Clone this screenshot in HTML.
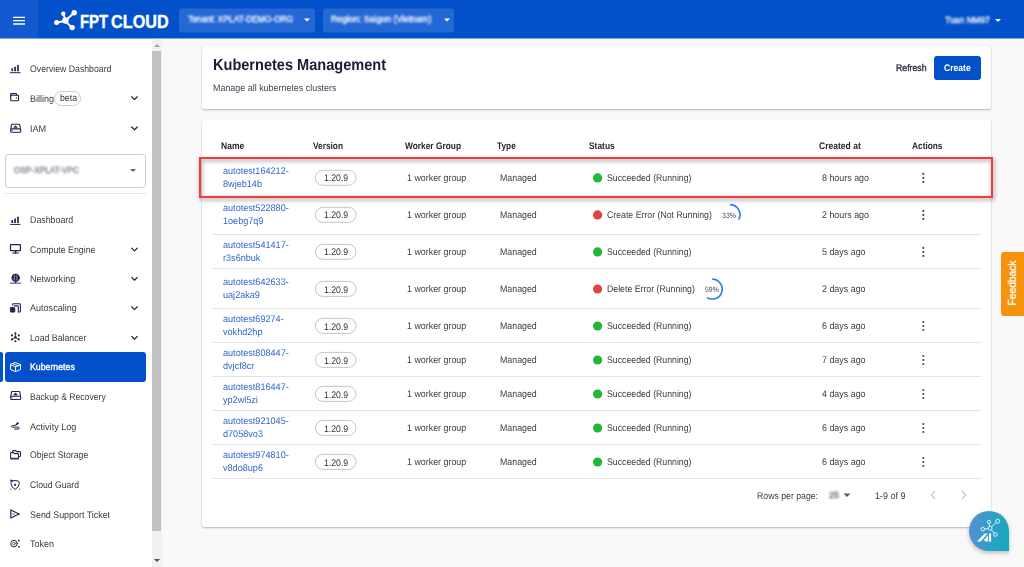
<!DOCTYPE html>
<html><head><meta charset="utf-8">
<style>
*{box-sizing:border-box;margin:0;padding:0}
html,body{width:1024px;height:567px;overflow:hidden;background:#f9f9f9;font-family:"Liberation Sans",sans-serif;color:#333;}
#hdr{z-index:5;position:absolute;left:0;top:0;width:1024px;height:39px;background:#0351ca;border-bottom:1px solid #82a8e4}
#ham{position:absolute;left:0;top:0;width:38.4px;height:38px;background:#1359cf;}
#ham i{position:absolute;left:13px;width:12px;height:2px;background:#fff;border-radius:1px}
.sel{position:absolute;top:9px;height:24px;background:#2468d6;border-radius:3px;transform:translateY(-0.6px)}
.blur{position:absolute;filter:blur(1.05px);-webkit-text-stroke:0.3px currentColor;color:#fff;font-size:8px;white-space:nowrap;line-height:10px}
.caret{position:absolute;width:0;height:0;border-left:3.2px solid transparent;border-right:3.2px solid transparent;border-top:3.4px solid #fff}
#side{position:absolute;left:0;top:38px;width:152px;height:529px;background:#fff;}
#sb{position:absolute;left:152px;top:38px;width:10px;height:529px;background:#f1f1f1}
#sb .th{position:absolute;left:0;top:12.7px;width:9.3px;height:480px;background:#c1c1c1}
.card{position:absolute;background:#fff;border-radius:2.5px;box-shadow:0 1px 2px rgba(0,0,0,.27),0 0 1px rgba(0,0,0,.07)}
.t{position:absolute;white-space:nowrap;text-rendering:geometricPrecision}
.row{position:absolute;left:212px;width:769px;height:1px;background:#e4e4e4}
.chip{position:absolute;left:315px;width:41.3px;height:15px;border:1px solid #c9c9c9;border-radius:8px;}
.dot{position:absolute;left:593px;width:9.2px;height:9.2px;border-radius:50%}
.g{background:#1fb837}.r{background:#dc4648}
.kebab{position:absolute;left:922.2px;width:3px}
.kebab i{display:block;width:2.2px;height:2.2px;background:#4a4a4a;border-radius:50%;margin-bottom:1.8px}
.chev{position:absolute;left:131px;width:7px;height:5px}
.ic{position:absolute;left:9px;width:13px;height:13px}
</style></head><body>
<div id="hdr"><div id="ham"></div><svg style="position:absolute;left:0;top:0" width="40" height="38" viewBox="0 0 40 38"><path d="M13.1 17.35H25M13.1 20.65H25M13.1 23.95H25" stroke="#fff" stroke-width="1.35"/></svg>
<svg style="position:absolute;left:50px;top:6px" width="125" height="28" viewBox="0 0 125 28">
<g stroke="#fff" stroke-width="1.8" fill="#fff"><line x1="7" y1="16.5" x2="15" y2="15"/><line x1="15" y1="15" x2="24.5" y2="6.5"/><line x1="15" y1="15" x2="22.5" y2="22"/><line x1="15.500" y1="14.500" x2="13.300" y2="7.700"/><circle cx="13.300" cy="7.700" r="2.200" stroke="none"/>
<circle cx="6.6" cy="16.6" r="2.5" stroke="none"/><circle cx="15.5" cy="14.5" r="3.2" stroke="none"/><circle cx="24.2" cy="6.8" r="2.7" stroke="none"/><circle cx="22.2" cy="21.6" r="2.7" stroke="none"/></g>
<g font-family="Liberation Sans" font-weight="bold" font-size="17.7" fill="#fff" stroke="#fff" stroke-width="0.35"><text x="30.000" y="21.900" textLength="28.200" lengthAdjust="spacingAndGlyphs">FPT</text><text x="61.100" y="21.900" textLength="57.600" lengthAdjust="spacingAndGlyphs">CLOUD</text></g></svg>
<div class="sel" style="left:179px;width:136px"><span class="blur" style="left:8.5px;top:5.5px;font-size:9.6px;transform:scaleX(0.875);transform-origin:0 50%">Tenant: XPLAT-DEMO-ORG</span><span class="caret" style="left:125px;top:10.2px"></span></div>
<div class="sel" style="left:323px;width:131px"><span class="blur" style="left:7.5px;top:5.5px;font-size:9.6px;transform:scaleX(0.915);transform-origin:0 50%">Region: Saigon (Vietnam)</span><span class="caret" style="left:120.500px;top:10.2px"></span></div>
<span class="blur" style="left:945px;top:15px;font-size:9.6px;transform:scaleX(0.9);transform-origin:0 50%">Tuan NM97</span><span class="caret" style="left:995px;top:18.5px"></span>
</div>
<div id="side">
<div style="position:absolute;left:5.3px;top:116px;width:140.4px;height:33.5px;border:1px solid #cfcfcf;border-radius:3px"></div>
<span class="blur" style="left:14px;top:126.5px;color:#77778c;font-size:9.6px;transform:scaleX(0.86);transform-origin:0 50%">OSP-XPLAT-VPC</span>
<span class="caret" style="left:130px;top:131px;border-top-color:#666"></span>
<div style="position:absolute;left:5px;top:155px;width:141px;height:1px;background:#e6e6e6"></div>
<div style="position:absolute;left:0;top:314.2px;width:2.7px;height:29.5px;background:#0351ca;border-radius:0 2px 2px 0"></div>
<div style="position:absolute;left:5.1px;top:314.2px;width:140.6px;height:29.5px;background:#0351ca;border-radius:3px"></div>
<div style="position:absolute;left:53.8px;top:53.3px;width:27.7px;height:14.4px;border:1px solid #ccc;border-radius:8px;background:#fff"></div>
</div>
<div id="sb"><div class="th"></div>
<span class="caret" style="left:2px;top:6px;border-width:0 3px 3px 3px;border-style:solid;border-color:transparent transparent #a3a3a3 transparent"></span>
<span class="caret" style="left:2px;top:521px;border-left-width:3px;border-right-width:3px;border-top:3px solid #505050"></span>
</div>
<div class="card" style="left:202px;top:46px;width:788.5px;height:63px"></div>
<div class="card" style="left:202px;top:119.5px;width:788.5px;height:407px"></div>
<div style="position:absolute;left:934px;top:56px;width:46.7px;height:23.6px;background:#0351ca;border-radius:3px"></div>
<svg style="position:absolute;left:0;top:0" width="152" height="567" viewBox="0 0 152 567" fill="none" stroke="#23234d" stroke-width="1.2" stroke-linecap="round" stroke-linejoin="round">
<!-- bars: overview -->
<g id="bars"><path d="M10.4 72.7H20.1" stroke-width="1"/><path d="M12.3 71.3V68.3M15.1 71.3V66.8M18 71.3V65" stroke-width="1.7" stroke-linecap="butt"/></g>
<use href="#bars" y="151.7"/>
<!-- wallet -->
<rect x="10.7" y="95.2" width="7.8" height="5.5" rx="0.7" stroke-width="1.15"/><path d="M10.7 95.4V94.4Q10.7 93.6 11.5 93.6H15.8Q16.6 93.6 16.6 94.4V94.9" stroke-width="1.1"/><circle cx="16.4" cy="97.9" r="0.6" fill="#23234d" stroke="none"/>
<!-- IAM drive -->
<g id="drive"><path d="M10.9 128.7L11.5 124.9Q11.6 124.2 12.3 124.2H19Q19.7 124.2 19.8 124.9L20.4 128.7" stroke-width="1.1"/><rect x="10.7" y="128.9" width="10" height="3.3" rx="0.8" stroke-width="1.1"/><path d="M13.7 127.6Q15.5 123.8 17.3 127.6Z" fill="#23234d" stroke-width="0.5"/><path d="M11.8 130.500H12.300" stroke-width="0.8"/></g>
<use href="#drive" y="267.3"/>
<!-- monitor -->
<rect x="10.5" y="244.700" width="9.9" height="6" rx="0.5" stroke-width="1.25"/><path d="M12.800 253H18.400" stroke-width="1.2"/><path d="M15.5 251V253" stroke-width="1.600"/>
<!-- globe -->
<circle cx="15.6" cy="277.800" r="3.800" fill="#23234d" stroke-width="0.8"/><path d="M14.3 275.200V280.400M16.9 275.200V280.400" stroke="#d6d6e6" stroke-width="0.600" stroke-dasharray="1.2 0.700"/><path d="M15.600 281.800V283.100M10.400 283.100H20.800" stroke-width="0.9"/>
<!-- autoscaling -->
<path d="M12.6 305.000V304.400Q12.600 303.700 13.3 303.700H19.700Q20.400 303.700 20.400 304.400V311.300Q20.400 312 19.700 312H19" stroke-width="1.1"/><path d="M14.200 305.900H17.600Q18.300 305.900 18.300 306.600V311.900" stroke-width="1.1"/><rect x="10.4" y="307.600" width="4.4" height="4.500" rx="0.4" fill="#23234d" stroke-width="0.9"/>
<!-- load balancer -->
<g stroke-width="0.9"><path d="M15.400 337.400V333.600M15.400 337.400L12.400 339.200M15.400 337.400L18.400 339.200"/></g>
<g fill="#23234d" stroke="none"><circle cx="15.400" cy="337.300" r="1.3"/><circle cx="15.400" cy="333.400" r="1.05"/><circle cx="18.800" cy="335.400" r="1.05"/><circle cx="18.800" cy="339.400" r="1.05"/><circle cx="12.000" cy="339.400" r="1.05"/><circle cx="12.000" cy="335.400" r="1.05"/><circle cx="15.400" cy="341.300" r="1.05"/></g>
<!-- cube (white) -->
<g stroke="#fff" stroke-width="1"><path d="M15.500 362.600L20.500 364.700V369.500L15.500 371.600L10.500 369.500V364.700Z"/><path d="M10.500 364.700L15.500 366.800L20.500 364.700M15.500 366.800V371.600M13 363.650L18 365.750"/></g>
<!-- activity log -->
<path d="M15 425.600H12.400Q11.400 425.600 11.400 426.400Q11.400 427.200 12.400 427.200H18.200Q19.200 427.200 19.200 428.150Q19.200 429.100 18.200 429.100H14.400" stroke-width="0.95"/><path d="M15.900 424.900L18.500 422.600" stroke-width="1.9" stroke-linecap="butt"/><path d="M15.300 425.400L15.800 425" stroke-width="0.7"/>
<!-- object storage: folders -->
<path d="M12.600 451.800V451.300Q12.600 450.600 13.300 450.600H15.600L16.600 451.600H19.800Q20.500 451.600 20.500 452.300V455.800Q20.500 456.500 19.800 456.500H19.200" stroke-width="1.05"/><path d="M10.600 453.300Q10.600 452.600 11.300 452.600H13.600L14.600 453.600H17.800Q18.500 453.600 18.500 454.300V458.300Q18.500 459 17.800 459H11.300Q10.600 459 10.600 458.300Z" stroke-width="1.05"/><path d="M11.200 458.300H18" stroke-width="1.1"/>
<!-- cloud guard shield -->
<path d="M12.400 480.900Q15.100 480.100 17.800 480.900Q19.400 481.300 19.300 483.200Q19 487.400 15.100 489.400Q11.200 487.400 10.900 483.200Q10.800 481.300 12.400 480.900Z" stroke-width="1"/><circle cx="15.100" cy="484.800" r="1.15" fill="#23234d" stroke="none"/><circle cx="11.100" cy="480.500" r="0.95" fill="#23234d" stroke="none"/><path d="M10.500 489.100H10.900M19.400 489.100H19.800" stroke-width="0.8"/>
<!-- send -->
<path d="M10.800 509.900L19.100 514L10.800 518.100Z" stroke-width="1.1"/><path d="M11.200 514H14.600" stroke-width="0.7" stroke="#55557a"/><circle cx="19.100" cy="514" r="0.7" fill="#23234d" stroke="none"/>
<!-- token -->
<circle cx="14.000" cy="543.600" r="3.300" stroke-width="1"/><circle cx="14.000" cy="543.600" r="1.400" stroke-width="0.6"/><circle cx="18.900" cy="540.400" r="0.9" fill="#23234d" stroke="none"/><circle cx="18.900" cy="546.800" r="0.9" fill="#23234d" stroke="none"/>
<!-- chevrons -->
<g id="chev" stroke-width="1.25"><path d="M131.700 96.800L134.500 99.600L137.300 96.800"/></g>
<use href="#chev" y="30.200"/><use href="#chev" y="151.300"/><use href="#chev" y="180.600"/><use href="#chev" y="210"/><use href="#chev" y="239.600"/>
</svg>

<!-- rows -->
<div class="row" style="top:233.8px"></div><div class="row" style="top:267.9px"></div><div class="row" style="top:307.9px"></div><div class="row" style="top:341.9px"></div><div class="row" style="top:375.9px"></div><div class="row" style="top:409.9px"></div><div class="row" style="top:443.9px"></div><div class="row" style="top:477.9px"></div>
<div style="position:absolute;left:199.2px;top:157.3px;width:793.5px;height:40.4px;border:2.3px solid #f63a3c;filter:drop-shadow(1px 2px 2px rgba(0,0,0,.45))"></div>
<svg style="position:absolute;left:0;top:0" width="1024" height="567" viewBox="0 0 1024 567"><rect x="315.4" y="170.30" width="40.6" height="15" rx="7.5" stroke="#c6c6c6" stroke-width="1" fill="none"/>
<circle cx="597.6" cy="177.90" r="4.6" fill="#1fb837"/>
<g fill="#505050"><circle cx="923.3" cy="173.90" r="1.1"/><circle cx="923.3" cy="177.90" r="1.1"/><circle cx="923.3" cy="181.90" r="1.1"/></g>
<rect x="315.4" y="207.30" width="40.6" height="15" rx="7.5" stroke="#c6c6c6" stroke-width="1" fill="none"/>
<circle cx="597.6" cy="214.90" r="4.6" fill="#dc4648"/>
<g fill="#505050"><circle cx="923.3" cy="210.90" r="1.1"/><circle cx="923.3" cy="214.90" r="1.1"/><circle cx="923.3" cy="218.90" r="1.1"/></g>
<rect x="315.4" y="244.35" width="40.6" height="15" rx="7.5" stroke="#c6c6c6" stroke-width="1" fill="none"/>
<circle cx="597.6" cy="251.95" r="4.6" fill="#1fb837"/>
<g fill="#505050"><circle cx="923.3" cy="247.95" r="1.1"/><circle cx="923.3" cy="251.95" r="1.1"/><circle cx="923.3" cy="255.95" r="1.1"/></g>
<rect x="315.4" y="281.40" width="40.6" height="15" rx="7.5" stroke="#c6c6c6" stroke-width="1" fill="none"/>
<circle cx="597.6" cy="289.00" r="4.6" fill="#dc4648"/>
<rect x="315.4" y="318.40" width="40.6" height="15" rx="7.5" stroke="#c6c6c6" stroke-width="1" fill="none"/>
<circle cx="597.6" cy="326.00" r="4.6" fill="#1fb837"/>
<g fill="#505050"><circle cx="923.3" cy="322.00" r="1.1"/><circle cx="923.3" cy="326.00" r="1.1"/><circle cx="923.3" cy="330.00" r="1.1"/></g>
<rect x="315.4" y="352.40" width="40.6" height="15" rx="7.5" stroke="#c6c6c6" stroke-width="1" fill="none"/>
<circle cx="597.6" cy="360.00" r="4.6" fill="#1fb837"/>
<g fill="#505050"><circle cx="923.3" cy="356.00" r="1.1"/><circle cx="923.3" cy="360.00" r="1.1"/><circle cx="923.3" cy="364.00" r="1.1"/></g>
<rect x="315.4" y="386.40" width="40.6" height="15" rx="7.5" stroke="#c6c6c6" stroke-width="1" fill="none"/>
<circle cx="597.6" cy="394.00" r="4.6" fill="#1fb837"/>
<g fill="#505050"><circle cx="923.3" cy="390.00" r="1.1"/><circle cx="923.3" cy="394.00" r="1.1"/><circle cx="923.3" cy="398.00" r="1.1"/></g>
<rect x="315.4" y="420.40" width="40.6" height="15" rx="7.5" stroke="#c6c6c6" stroke-width="1" fill="none"/>
<circle cx="597.6" cy="428.00" r="4.6" fill="#1fb837"/>
<g fill="#505050"><circle cx="923.3" cy="424.00" r="1.1"/><circle cx="923.3" cy="428.00" r="1.1"/><circle cx="923.3" cy="432.00" r="1.1"/></g>
<rect x="315.4" y="454.40" width="40.6" height="15" rx="7.5" stroke="#c6c6c6" stroke-width="1" fill="none"/>
<circle cx="597.6" cy="462.00" r="4.6" fill="#1fb837"/>
<g fill="#505050"><circle cx="923.3" cy="458.00" r="1.1"/><circle cx="923.3" cy="462.00" r="1.1"/><circle cx="923.3" cy="466.00" r="1.1"/></g></svg>
<span class="t" style="left:29.5px;top:62.60px;font-size:9.6px;line-height:14px;font-weight:normal;color:#3a3a44;transform:scaleX(0.9085);transform-origin:0 50%;">Overview Dashboard</span>
<span class="t" style="left:29.5px;top:92.60px;font-size:9.6px;line-height:14px;font-weight:normal;color:#3a3a44;transform:scaleX(0.9372);transform-origin:0 50%;">Billing</span>
<span class="t" style="left:29.5px;top:122.90px;font-size:9.6px;line-height:14px;font-weight:normal;color:#3a3a44;transform:scaleX(0.9495);transform-origin:0 50%;">IAM</span>
<span class="t" style="left:29.5px;top:214.40px;font-size:9.6px;line-height:14px;font-weight:normal;color:#3a3a44;transform:scaleX(0.9204);transform-origin:0 50%;">Dashboard</span>
<span class="t" style="left:29.5px;top:244.10px;font-size:9.6px;line-height:14px;font-weight:normal;color:#3a3a44;transform:scaleX(0.9151);transform-origin:0 50%;">Compute Engine</span>
<span class="t" style="left:29.5px;top:273.20px;font-size:9.6px;line-height:14px;font-weight:normal;color:#3a3a44;transform:scaleX(0.9417);transform-origin:0 50%;">Networking</span>
<span class="t" style="left:29.5px;top:302.40px;font-size:9.6px;line-height:14px;font-weight:normal;color:#3a3a44;transform:scaleX(0.9434);transform-origin:0 50%;">Autoscaling</span>
<span class="t" style="left:29.5px;top:332.20px;font-size:9.6px;line-height:14px;font-weight:normal;color:#3a3a44;transform:scaleX(0.9099);transform-origin:0 50%;">Load Balancer</span>
<span class="t" style="left:29.5px;top:361.30px;font-size:9.6px;line-height:14px;font-weight:normal;-webkit-text-stroke:0.35px #fff;color:#fff;transform:scaleX(0.9128);transform-origin:0 50%;">Kubernetes</span>
<span class="t" style="left:29.5px;top:390.60px;font-size:9.6px;line-height:14px;font-weight:normal;color:#3a3a44;transform:scaleX(0.8985);transform-origin:0 50%;">Backup &amp; Recovery</span>
<span class="t" style="left:29.5px;top:420.60px;font-size:9.6px;line-height:14px;font-weight:normal;color:#3a3a44;transform:scaleX(0.9437);transform-origin:0 50%;">Activity Log</span>
<span class="t" style="left:29.5px;top:449.40px;font-size:9.6px;line-height:14px;font-weight:normal;color:#3a3a44;transform:scaleX(0.9109);transform-origin:0 50%;">Object Storage</span>
<span class="t" style="left:29.5px;top:478.50px;font-size:9.6px;line-height:14px;font-weight:normal;color:#3a3a44;transform:scaleX(0.9006);transform-origin:0 50%;">Cloud Guard</span>
<span class="t" style="left:29.5px;top:508.60px;font-size:9.6px;line-height:14px;font-weight:normal;color:#3a3a44;transform:scaleX(0.9270);transform-origin:0 50%;">Send Support Ticket</span>
<span class="t" style="left:29.5px;top:537.90px;font-size:9.6px;line-height:14px;font-weight:normal;color:#3a3a44;transform:scaleX(0.9333);transform-origin:0 50%;">Token</span>
<span class="t" style="left:59.5px;top:91.80px;font-size:9.6px;line-height:14px;font-weight:normal;color:#333;transform:scaleX(0.9097);transform-origin:0 50%;">beta</span>
<span class="t" style="left:213px;top:55.60px;font-size:16px;line-height:20px;font-weight:bold;color:#1b1b3a;transform:scaleX(0.9093);transform-origin:0 50%;">Kubernetes Management</span>
<span class="t" style="left:213px;top:81.60px;font-size:9.6px;line-height:14px;font-weight:normal;color:#444456;transform:scaleX(0.9300);transform-origin:0 50%;">Manage all kubernetes clusters</span>
<span class="t" style="left:895.8px;top:62.40px;font-size:9.6px;line-height:14px;font-weight:normal;-webkit-text-stroke:0.35px #2e2e3e;color:#2e2e3e;transform:scaleX(0.9109);transform-origin:0 50%;">Refresh</span>
<span class="t" style="left:944.2px;top:62.40px;font-size:9.6px;line-height:14px;font-weight:bold;color:#fff;transform:scaleX(0.8937);transform-origin:0 50%;">Create</span>
<span class="t" style="left:220.5px;top:140.10px;font-size:9.6px;line-height:14px;font-weight:bold;color:#262630;transform:scaleX(0.8894);transform-origin:0 50%;">Name</span>
<span class="t" style="left:313px;top:140.10px;font-size:9.6px;line-height:14px;font-weight:bold;color:#262630;transform:scaleX(0.8653);transform-origin:0 50%;">Version</span>
<span class="t" style="left:404.5px;top:140.10px;font-size:9.6px;line-height:14px;font-weight:bold;color:#262630;transform:scaleX(0.8705);transform-origin:0 50%;">Worker Group</span>
<span class="t" style="left:497.25px;top:140.10px;font-size:9.6px;line-height:14px;font-weight:bold;color:#262630;transform:scaleX(0.8646);transform-origin:0 50%;">Type</span>
<span class="t" style="left:589px;top:140.10px;font-size:9.6px;line-height:14px;font-weight:bold;color:#262630;transform:scaleX(0.8780);transform-origin:0 50%;">Status</span>
<span class="t" style="left:819.25px;top:140.10px;font-size:9.6px;line-height:14px;font-weight:bold;color:#262630;transform:scaleX(0.8898);transform-origin:0 50%;">Created at</span>
<span class="t" style="left:911.75px;top:140.10px;font-size:9.6px;line-height:14px;font-weight:bold;color:#262630;transform:scaleX(0.8668);transform-origin:0 50%;">Actions</span>
<span class="t" style="left:223px;top:165.00px;font-size:9.6px;line-height:14px;font-weight:normal;color:#3366cc;transform:scaleX(0.9480);transform-origin:0 50%;">autotest164212-</span>
<span class="t" style="left:223px;top:178.00px;font-size:9.6px;line-height:14px;font-weight:normal;color:#3366cc;transform:scaleX(0.9480);transform-origin:0 50%;">8wjeb14b</span>
<span class="t" style="left:323.8px;top:172.40px;font-size:9.6px;line-height:14px;font-weight:normal;color:#333;transform:scaleX(0.9068);transform-origin:0 50%;">1.20.9</span>
<span class="t" style="left:407.4px;top:171.90px;font-size:9.6px;line-height:14px;font-weight:normal;color:#3b3b4a;transform:scaleX(0.9250);transform-origin:0 50%;">1 worker group</span>
<span class="t" style="left:499.75px;top:171.90px;font-size:9.6px;line-height:14px;font-weight:normal;color:#3b3b4a;transform:scaleX(0.9184);transform-origin:0 50%;">Managed</span>
<span class="t" style="left:607px;top:171.90px;font-size:9.6px;line-height:14px;font-weight:normal;color:#3b3b4a;transform:scaleX(0.9104);transform-origin:0 50%;">Succeeded (Running)</span>
<span class="t" style="left:821.75px;top:171.90px;font-size:9.6px;line-height:14px;font-weight:normal;color:#3b3b4a;transform:scaleX(0.9275);transform-origin:0 50%;">8 hours ago</span>
<span class="t" style="left:223px;top:202.00px;font-size:9.6px;line-height:14px;font-weight:normal;color:#3366cc;transform:scaleX(0.9480);transform-origin:0 50%;">autotest522880-</span>
<span class="t" style="left:223px;top:215.00px;font-size:9.6px;line-height:14px;font-weight:normal;color:#3366cc;transform:scaleX(0.9480);transform-origin:0 50%;">1oebg7q9</span>
<span class="t" style="left:323.8px;top:209.40px;font-size:9.6px;line-height:14px;font-weight:normal;color:#333;transform:scaleX(0.9068);transform-origin:0 50%;">1.20.9</span>
<span class="t" style="left:407.4px;top:208.90px;font-size:9.6px;line-height:14px;font-weight:normal;color:#3b3b4a;transform:scaleX(0.9250);transform-origin:0 50%;">1 worker group</span>
<span class="t" style="left:499.75px;top:208.90px;font-size:9.6px;line-height:14px;font-weight:normal;color:#3b3b4a;transform:scaleX(0.9184);transform-origin:0 50%;">Managed</span>
<span class="t" style="left:607px;top:208.90px;font-size:9.6px;line-height:14px;font-weight:normal;color:#3b3b4a;transform:scaleX(0.9104);transform-origin:0 50%;">Create Error (Not Running)</span>
<span class="t" style="left:821.75px;top:208.90px;font-size:9.6px;line-height:14px;font-weight:normal;color:#3b3b4a;transform:scaleX(0.9275);transform-origin:0 50%;">2 hours ago</span>
<span class="t" style="left:223px;top:239.00px;font-size:9.6px;line-height:14px;font-weight:normal;color:#3366cc;transform:scaleX(0.9480);transform-origin:0 50%;">autotest541417-</span>
<span class="t" style="left:223px;top:252.00px;font-size:9.6px;line-height:14px;font-weight:normal;color:#3366cc;transform:scaleX(0.9480);transform-origin:0 50%;">r3s6nbuk</span>
<span class="t" style="left:323.8px;top:246.45px;font-size:9.6px;line-height:14px;font-weight:normal;color:#333;transform:scaleX(0.9068);transform-origin:0 50%;">1.20.9</span>
<span class="t" style="left:407.4px;top:245.95px;font-size:9.6px;line-height:14px;font-weight:normal;color:#3b3b4a;transform:scaleX(0.9250);transform-origin:0 50%;">1 worker group</span>
<span class="t" style="left:499.75px;top:245.95px;font-size:9.6px;line-height:14px;font-weight:normal;color:#3b3b4a;transform:scaleX(0.9184);transform-origin:0 50%;">Managed</span>
<span class="t" style="left:607px;top:245.95px;font-size:9.6px;line-height:14px;font-weight:normal;color:#3b3b4a;transform:scaleX(0.9104);transform-origin:0 50%;">Succeeded (Running)</span>
<span class="t" style="left:821.75px;top:245.95px;font-size:9.6px;line-height:14px;font-weight:normal;color:#3b3b4a;transform:scaleX(0.9275);transform-origin:0 50%;">5 days ago</span>
<span class="t" style="left:223px;top:276.00px;font-size:9.6px;line-height:14px;font-weight:normal;color:#3366cc;transform:scaleX(0.9480);transform-origin:0 50%;">autotest642633-</span>
<span class="t" style="left:223px;top:289.00px;font-size:9.6px;line-height:14px;font-weight:normal;color:#3366cc;transform:scaleX(0.9480);transform-origin:0 50%;">uaj2aka9</span>
<span class="t" style="left:323.8px;top:283.50px;font-size:9.6px;line-height:14px;font-weight:normal;color:#333;transform:scaleX(0.9068);transform-origin:0 50%;">1.20.9</span>
<span class="t" style="left:407.4px;top:283.00px;font-size:9.6px;line-height:14px;font-weight:normal;color:#3b3b4a;transform:scaleX(0.9250);transform-origin:0 50%;">1 worker group</span>
<span class="t" style="left:499.75px;top:283.00px;font-size:9.6px;line-height:14px;font-weight:normal;color:#3b3b4a;transform:scaleX(0.9184);transform-origin:0 50%;">Managed</span>
<span class="t" style="left:607px;top:283.00px;font-size:9.6px;line-height:14px;font-weight:normal;color:#3b3b4a;transform:scaleX(0.9104);transform-origin:0 50%;">Delete Error (Running)</span>
<span class="t" style="left:821.75px;top:283.00px;font-size:9.6px;line-height:14px;font-weight:normal;color:#3b3b4a;transform:scaleX(0.9275);transform-origin:0 50%;">2 days ago</span>
<span class="t" style="left:223px;top:313.00px;font-size:9.6px;line-height:14px;font-weight:normal;color:#3366cc;transform:scaleX(0.9480);transform-origin:0 50%;">autotest69274-</span>
<span class="t" style="left:223px;top:326.00px;font-size:9.6px;line-height:14px;font-weight:normal;color:#3366cc;transform:scaleX(0.9480);transform-origin:0 50%;">vokhd2hp</span>
<span class="t" style="left:323.8px;top:320.50px;font-size:9.6px;line-height:14px;font-weight:normal;color:#333;transform:scaleX(0.9068);transform-origin:0 50%;">1.20.9</span>
<span class="t" style="left:407.4px;top:320.00px;font-size:9.6px;line-height:14px;font-weight:normal;color:#3b3b4a;transform:scaleX(0.9250);transform-origin:0 50%;">1 worker group</span>
<span class="t" style="left:499.75px;top:320.00px;font-size:9.6px;line-height:14px;font-weight:normal;color:#3b3b4a;transform:scaleX(0.9184);transform-origin:0 50%;">Managed</span>
<span class="t" style="left:607px;top:320.00px;font-size:9.6px;line-height:14px;font-weight:normal;color:#3b3b4a;transform:scaleX(0.9104);transform-origin:0 50%;">Succeeded (Running)</span>
<span class="t" style="left:821.75px;top:320.00px;font-size:9.6px;line-height:14px;font-weight:normal;color:#3b3b4a;transform:scaleX(0.9275);transform-origin:0 50%;">6 days ago</span>
<span class="t" style="left:223px;top:347.00px;font-size:9.6px;line-height:14px;font-weight:normal;color:#3366cc;transform:scaleX(0.9480);transform-origin:0 50%;">autotest808447-</span>
<span class="t" style="left:223px;top:360.00px;font-size:9.6px;line-height:14px;font-weight:normal;color:#3366cc;transform:scaleX(0.9480);transform-origin:0 50%;">dvjcf8cr</span>
<span class="t" style="left:323.8px;top:354.50px;font-size:9.6px;line-height:14px;font-weight:normal;color:#333;transform:scaleX(0.9068);transform-origin:0 50%;">1.20.9</span>
<span class="t" style="left:407.4px;top:354.00px;font-size:9.6px;line-height:14px;font-weight:normal;color:#3b3b4a;transform:scaleX(0.9250);transform-origin:0 50%;">1 worker group</span>
<span class="t" style="left:499.75px;top:354.00px;font-size:9.6px;line-height:14px;font-weight:normal;color:#3b3b4a;transform:scaleX(0.9184);transform-origin:0 50%;">Managed</span>
<span class="t" style="left:607px;top:354.00px;font-size:9.6px;line-height:14px;font-weight:normal;color:#3b3b4a;transform:scaleX(0.9104);transform-origin:0 50%;">Succeeded (Running)</span>
<span class="t" style="left:821.75px;top:354.00px;font-size:9.6px;line-height:14px;font-weight:normal;color:#3b3b4a;transform:scaleX(0.9275);transform-origin:0 50%;">7 days ago</span>
<span class="t" style="left:223px;top:381.00px;font-size:9.6px;line-height:14px;font-weight:normal;color:#3366cc;transform:scaleX(0.9480);transform-origin:0 50%;">autotest816447-</span>
<span class="t" style="left:223px;top:394.00px;font-size:9.6px;line-height:14px;font-weight:normal;color:#3366cc;transform:scaleX(0.9480);transform-origin:0 50%;">yp2wl5zi</span>
<span class="t" style="left:323.8px;top:388.50px;font-size:9.6px;line-height:14px;font-weight:normal;color:#333;transform:scaleX(0.9068);transform-origin:0 50%;">1.20.9</span>
<span class="t" style="left:407.4px;top:388.00px;font-size:9.6px;line-height:14px;font-weight:normal;color:#3b3b4a;transform:scaleX(0.9250);transform-origin:0 50%;">1 worker group</span>
<span class="t" style="left:499.75px;top:388.00px;font-size:9.6px;line-height:14px;font-weight:normal;color:#3b3b4a;transform:scaleX(0.9184);transform-origin:0 50%;">Managed</span>
<span class="t" style="left:607px;top:388.00px;font-size:9.6px;line-height:14px;font-weight:normal;color:#3b3b4a;transform:scaleX(0.9104);transform-origin:0 50%;">Succeeded (Running)</span>
<span class="t" style="left:821.75px;top:388.00px;font-size:9.6px;line-height:14px;font-weight:normal;color:#3b3b4a;transform:scaleX(0.9275);transform-origin:0 50%;">4 days ago</span>
<span class="t" style="left:223px;top:415.00px;font-size:9.6px;line-height:14px;font-weight:normal;color:#3366cc;transform:scaleX(0.9480);transform-origin:0 50%;">autotest921045-</span>
<span class="t" style="left:223px;top:428.00px;font-size:9.6px;line-height:14px;font-weight:normal;color:#3366cc;transform:scaleX(0.9480);transform-origin:0 50%;">d7058vo3</span>
<span class="t" style="left:323.8px;top:422.50px;font-size:9.6px;line-height:14px;font-weight:normal;color:#333;transform:scaleX(0.9068);transform-origin:0 50%;">1.20.9</span>
<span class="t" style="left:407.4px;top:422.00px;font-size:9.6px;line-height:14px;font-weight:normal;color:#3b3b4a;transform:scaleX(0.9250);transform-origin:0 50%;">1 worker group</span>
<span class="t" style="left:499.75px;top:422.00px;font-size:9.6px;line-height:14px;font-weight:normal;color:#3b3b4a;transform:scaleX(0.9184);transform-origin:0 50%;">Managed</span>
<span class="t" style="left:607px;top:422.00px;font-size:9.6px;line-height:14px;font-weight:normal;color:#3b3b4a;transform:scaleX(0.9104);transform-origin:0 50%;">Succeeded (Running)</span>
<span class="t" style="left:821.75px;top:422.00px;font-size:9.6px;line-height:14px;font-weight:normal;color:#3b3b4a;transform:scaleX(0.9275);transform-origin:0 50%;">6 days ago</span>
<span class="t" style="left:223px;top:449.00px;font-size:9.6px;line-height:14px;font-weight:normal;color:#3366cc;transform:scaleX(0.9480);transform-origin:0 50%;">autotest974810-</span>
<span class="t" style="left:223px;top:462.00px;font-size:9.6px;line-height:14px;font-weight:normal;color:#3366cc;transform:scaleX(0.9480);transform-origin:0 50%;">v8do8up6</span>
<span class="t" style="left:323.8px;top:456.50px;font-size:9.6px;line-height:14px;font-weight:normal;color:#333;transform:scaleX(0.9068);transform-origin:0 50%;">1.20.9</span>
<span class="t" style="left:407.4px;top:456.00px;font-size:9.6px;line-height:14px;font-weight:normal;color:#3b3b4a;transform:scaleX(0.9250);transform-origin:0 50%;">1 worker group</span>
<span class="t" style="left:499.75px;top:456.00px;font-size:9.6px;line-height:14px;font-weight:normal;color:#3b3b4a;transform:scaleX(0.9184);transform-origin:0 50%;">Managed</span>
<span class="t" style="left:607px;top:456.00px;font-size:9.6px;line-height:14px;font-weight:normal;color:#3b3b4a;transform:scaleX(0.9104);transform-origin:0 50%;">Succeeded (Running)</span>
<span class="t" style="left:821.75px;top:456.00px;font-size:9.6px;line-height:14px;font-weight:normal;color:#3b3b4a;transform:scaleX(0.9275);transform-origin:0 50%;">6 days ago</span>
<span class="t" style="left:757.2px;top:489.60px;font-size:9.6px;line-height:14px;font-weight:normal;color:#3b3b4a;transform:scaleX(0.9077);transform-origin:0 50%;">Rows per page:</span>
<span class="t" style="left:874.8px;top:489.60px;font-size:9.6px;line-height:14px;font-weight:normal;color:#3b3b4a;transform:scaleX(0.9371);transform-origin:0 50%;">1-9 of 9</span>
<span class="t" style="left:722.1px;top:209.60px;font-size:7.7px;line-height:12px;font-weight:normal;color:#44445f;transform:scaleX(0.9161);transform-origin:0 50%;">33%</span>
<span class="t" style="left:704.9px;top:283.70px;font-size:7.7px;line-height:12px;font-weight:normal;color:#44445f;transform:scaleX(0.8966);transform-origin:0 50%;">59%</span>
<!-- feedback -->
<div style="position:absolute;left:1001.4px;top:252px;width:23px;height:64px;background:#f5930c;border-radius:3px 0 0 3px"></div>
<span style="position:absolute;left:1012.8px;top:283.4px;white-space:nowrap;color:#fff;font-size:10.4px;line-height:12px;transform:translate(-50%,-50%) rotate(-90deg);letter-spacing:-0.1px;-webkit-text-stroke:0.2px #fff">Feedback</span>
<!-- AI -->
<div style="position:absolute;left:968.5px;top:511px;width:40px;height:40px;border-radius:20px 20px 0 20px;background:linear-gradient(100deg,#5d8fd2 0%,#2f9fc8 50%,#14a9be 100%);box-shadow:0 2px 4px rgba(0,0,0,.25)"></div>
<!-- progress + footer + AI -->
<svg style="position:absolute;left:0;top:0" width="1024" height="567" viewBox="0 0 1024 567" fill="none">
<path d="M730 204.700A10 10 0 0 1 738.750 219.550" stroke="#2f7ff2" stroke-width="1.700"/>
<path d="M712.200 279.200A10 10 0 1 1 706.840 297.640" stroke="#2f7ff2" stroke-width="1.700"/>
<path d="M935 491L931.500 495L935 499" stroke="#b9b9b9" stroke-width="1.100"/>
<path d="M962 491L965.500 495L962 499" stroke="#b9b9b9" stroke-width="1.100"/>
<path d="M843.600 493.500H850.400L847 497Z" fill="#555"/>
<g stroke="#fff" stroke-width="0.85">
<path d="M984.700 529L988.100 528.500M989.200 523.600L989.700 526.300M991.500 526.800L996.200 522.700M991.300 529.800L994.100 533.100"/>
<rect x="988.200" y="526.400" width="3.700" height="3.700" rx="1.300"/><circle cx="982.800" cy="529.200" r="1.800"/><circle cx="988.900" cy="521.900" r="1.600"/><circle cx="997.700" cy="521.300" r="2"/><circle cx="995.300" cy="534.500" r="1.800"/></g>
<g fill="#fff"><path d="M977 541.600H980.800L987.400 533.400H984.600Z"/><path d="M985.300 541.600H987.900V535.200L985.300 538.400V539H984.800L983.600 540.500H985.300Z"/><path d="M988.900 533.400H991.100V541.600H988.900Z"/></g>
</svg>
<span class="blur" style="left:829px;top:490px;color:#667;font-size:9px;filter:blur(1px)">25</span>
</body></html>
